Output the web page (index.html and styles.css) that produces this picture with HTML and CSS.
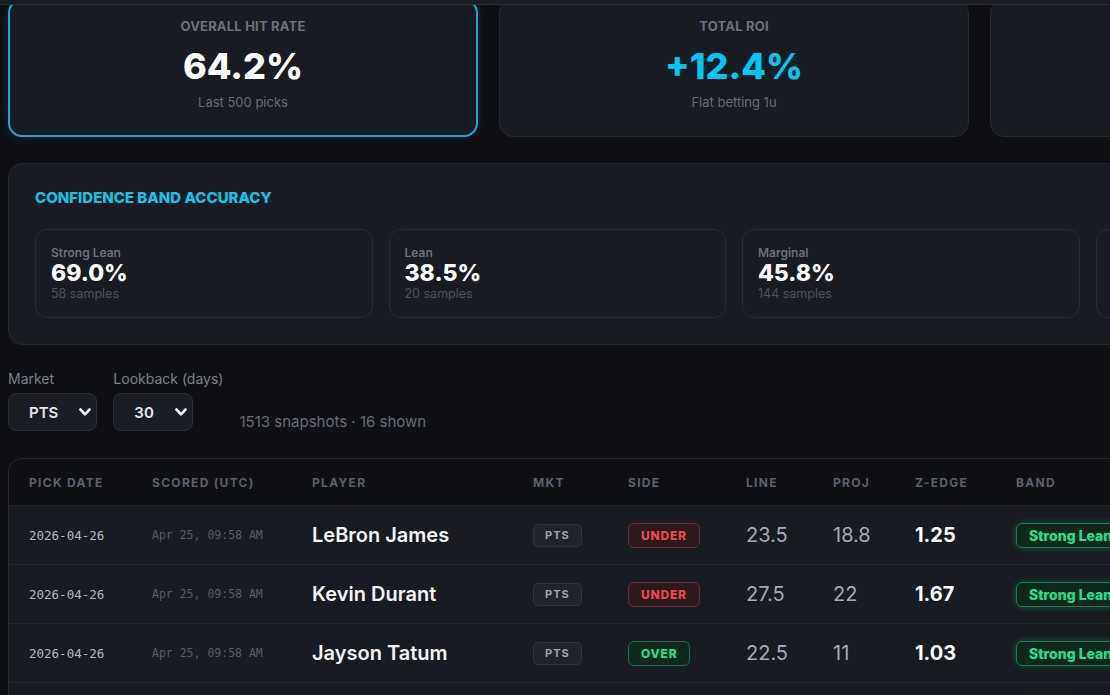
FILE: index.html
```html
<!DOCTYPE html>
<html>
<head>
    <title>Model Accuracy</title>
    <link rel="stylesheet" href="styles.css">
</head>
<body>
    <header class="topbar"></header>

    <main class="page">
        <section class="stats">
            <div class="stat stat-active">
                <div class="stat-label">OVERALL HIT RATE</div>
                <div class="stat-value">64.2%</div>
                <div class="stat-sub">Last 500 picks</div>
            </div>
            <div class="stat">
                <div class="stat-label">TOTAL ROI</div>
                <div class="stat-value stat-cyan">+12.4%</div>
                <div class="stat-sub">Flat betting 1u</div>
            </div>
            <div class="stat">
                <div class="stat-label">PICKS GRADED</div>
                <div class="stat-value">500</div>
                <div class="stat-sub">Since season start</div>
            </div>
        </section>

        <section class="panel">
            <h2 class="panel-title">CONFIDENCE BAND ACCURACY</h2>
            <div class="bands">
                <div class="band">
                    <div class="band-name">Strong Lean</div>
                    <div class="band-rate">69.0%</div>
                    <div class="band-count">58 samples</div>
                </div>
                <div class="band">
                    <div class="band-name">Lean</div>
                    <div class="band-rate">38.5%</div>
                    <div class="band-count">20 samples</div>
                </div>
                <div class="band">
                    <div class="band-name">Marginal</div>
                    <div class="band-rate">45.8%</div>
                    <div class="band-count">144 samples</div>
                </div>
                <div class="band">
                    <div class="band-name">No Edge</div>
                    <div class="band-rate">51.2%</div>
                    <div class="band-count">278 samples</div>
                </div>
            </div>
        </section>

        <section class="filters">
            <div class="filter">
                <label class="filter-label">Market</label>
                <div class="select">
                    <span>PTS</span>
                    <svg class="chevron" width="12" height="8" viewBox="0 0 12 8"><polyline points="1.5,1.5 6,6.3 10.5,1.5"/></svg>
                </div>
            </div>
            <div class="filter">
                <label class="filter-label">Lookback (days)</label>
                <div class="select">
                    <span>30</span>
                    <svg class="chevron" width="12" height="8" viewBox="0 0 12 8"><polyline points="1.5,1.5 6,6.3 10.5,1.5"/></svg>
                </div>
            </div>
            <p class="count">1513 snapshots · 16 shown</p>
        </section>

        <div class="table-wrap">
            <table class="picks">
                <colgroup>
                    <col style="width: 143px">
                    <col style="width: 160px">
                    <col style="width: 221px">
                    <col style="width: 95px">
                    <col style="width: 118px">
                    <col style="width: 87px">
                    <col style="width: 82px">
                    <col style="width: 101px">
                    <col style="width: 170px">
                    <col>
                </colgroup>
                <thead>
                    <tr>
                        <th>PICK DATE</th>
                        <th>SCORED (UTC)</th>
                        <th>PLAYER</th>
                        <th>MKT</th>
                        <th>SIDE</th>
                        <th>LINE</th>
                        <th>PROJ</th>
                        <th>Z-EDGE</th>
                        <th>BAND</th>
                        <th>RESULT</th>
                    </tr>
                </thead>
                <tbody>
                    <tr>
                        <td class="date">2026-04-26</td>
                        <td class="scored">Apr 25, 09:58 AM</td>
                        <td class="player">LeBron James</td>
                        <td><span class="mkt">PTS</span></td>
                        <td><span class="side side-under">UNDER</span></td>
                        <td class="num">23.5</td>
                        <td class="num">18.8</td>
                        <td class="edge">1.25</td>
                        <td><span class="band-tag">Strong Lean</span></td>
                        <td class="num">Pending</td>
                    </tr>
                    <tr>
                        <td class="date">2026-04-26</td>
                        <td class="scored">Apr 25, 09:58 AM</td>
                        <td class="player">Kevin Durant</td>
                        <td><span class="mkt">PTS</span></td>
                        <td><span class="side side-under">UNDER</span></td>
                        <td class="num">27.5</td>
                        <td class="num">22</td>
                        <td class="edge">1.67</td>
                        <td><span class="band-tag">Strong Lean</span></td>
                        <td class="num">Pending</td>
                    </tr>
                    <tr>
                        <td class="date">2026-04-26</td>
                        <td class="scored">Apr 25, 09:58 AM</td>
                        <td class="player">Jayson Tatum</td>
                        <td><span class="mkt">PTS</span></td>
                        <td><span class="side side-over">OVER</span></td>
                        <td class="num">22.5</td>
                        <td class="num">11</td>
                        <td class="edge">1.03</td>
                        <td><span class="band-tag">Strong Lean</span></td>
                        <td class="num">Pending</td>
                    </tr>
                    <tr>
                        <td class="date">2026-04-26</td>
                        <td class="scored">Apr 25, 09:58 AM</td>
                        <td class="player">Nikola Jokic</td>
                        <td><span class="mkt">PTS</span></td>
                        <td><span class="side side-over">OVER</span></td>
                        <td class="num">26.5</td>
                        <td class="num">29.1</td>
                        <td class="edge">0.84</td>
                        <td><span class="band-tag">Lean</span></td>
                        <td class="num">Pending</td>
                    </tr>
                </tbody>
            </table>
        </div>
    </main>
</body>
</html>
```

FILE: styles.css
```css
html, body {
    overflow: hidden;
}

body {
    margin: 0;
    background-color: #0f1014;
    color: #e8eaee;
    font-family: Inter, "Noto Sans", sans-serif;
}

/* Barra in alto (sticky) */
.topbar {
    position: sticky;
    top: 0;
    z-index: 5;
    height: 4px;
    background-color: #1a1d24;
    border-bottom: 1px solid #2a2e36;
}

.page {
    width: 1452px;
    padding: 0 8px 40px;
    margin-top: -6px;
}

/* Card statistiche */
.stats {
    display: grid;
    grid-template-columns: repeat(3, 1fr);
    gap: 21px;
}

.stat {
    background-color: #181b21;
    border: 1px solid #262a31;
    border-radius: 14px;
    padding: 18px 20px 26px;
    text-align: center;
}

.stat-active {
    border: 2px solid #19a6cf;
    padding: 17px 19px 25px;
    box-shadow: 0 0 10px rgba(0, 190, 235, 0.12);
}

.stat-label {
    font-size: 13px;
    line-height: 16px;
    font-weight: 700;
    letter-spacing: 0.2px;
    color: #6b707c;
}

.stat-value {
    margin-top: 11px;
    font-size: 36px;
    line-height: 42px;
    font-weight: 800;
    color: #fff;
}

.stat-cyan {
    color: #00c8f2;
}

.stat-sub {
    margin-top: 7px;
    font-size: 13px;
    line-height: 16px;
    color: #676c77;
}

/* Pannello fasce di confidenza */
.panel {
    margin-top: 26px;
    background-color: #181b21;
    border: 1px solid #262a31;
    border-radius: 14px;
    padding: 25px 26px 26px;
}

.panel-title {
    margin: 0;
    font-size: 15px;
    line-height: 18px;
    font-weight: 800;
    color: #14c3ec;
}

.bands {
    margin-top: 22px;
    display: grid;
    grid-template-columns: repeat(4, 1fr);
    gap: 16px;
}

.band {
    border: 1px solid #272b33;
    border-radius: 12px;
    padding: 15px 15px 16px;
}

.band-name {
    font-size: 12px;
    line-height: 15px;
    font-weight: 600;
    color: #6b707c;
}

.band-rate {
    font-size: 23px;
    line-height: 26px;
    font-weight: 800;
    color: #fff;
}

.band-count {
    font-size: 12.5px;
    line-height: 15px;
    color: #4d525d;
}

/* Filtri */
.filters {
    margin-top: 26px;
    display: flex;
    align-items: flex-end;
    gap: 16px;
}

.filter {
    display: flex;
    flex-direction: column;
    align-items: flex-start;
    gap: 6px;
}

.filter-label {
    font-size: 14px;
    line-height: 16px;
    color: #7b808b;
}

.select {
    display: flex;
    align-items: center;
    gap: 21px;
    height: 36px;
    padding: 0 5px 0 20px;
    background-color: #1a1d24;
    border: 1px solid #282c34;
    border-radius: 8px;
    font-size: 15px;
    font-weight: 600;
    color: #e6e8ec;
}

.chevron {
    fill: none;
    stroke: #f2f3f5;
    stroke-width: 2.6;
    stroke-linecap: round;
    stroke-linejoin: round;
}

.count {
    margin: 0;
    font-size: 15px;
    line-height: 18px;
    color: #676c77;
}

/* Tabella pick */
.table-wrap {
    margin-top: 27px;
    border: 1px solid #262a31;
    border-radius: 14px;
    overflow: hidden;
    background-color: #181b21;
}

.picks {
    width: 100%;
    table-layout: fixed;
    border-collapse: collapse;
}

.picks th {
    height: 46px;
    padding: 0;
    background-color: #0e1014;
    text-align: left;
    font-size: 12px;
    font-weight: 700;
    letter-spacing: 1.3px;
    color: #5b606b;
}

.picks td {
    height: 58px;
    padding: 0;
    border-top: 1px solid #22262d;
    white-space: nowrap;
}

.picks th:first-child,
.picks td:first-child {
    padding-left: 20px;
}

.date {
    font-family: "DejaVu Sans Mono", monospace;
    font-size: 12.5px;
    color: #b4b8c1;
}

.scored {
    font-family: "DejaVu Sans Mono", monospace;
    font-size: 11.5px;
    color: #575c67;
}

.player {
    font-size: 20px;
    font-weight: 600;
    color: #f4f5f7;
}

.num {
    font-size: 20px;
    color: #a5aab4;
}

.edge {
    font-size: 20px;
    font-weight: 700;
    color: #fff;
}

.mkt {
    display: inline-block;
    padding: 0 11px;
    line-height: 21px;
    border: 1px solid #2e323b;
    border-radius: 5px;
    background-color: #1f232a;
    font-size: 11px;
    font-weight: 700;
    letter-spacing: 1px;
    color: #9ea3ad;
}

.side {
    display: inline-block;
    padding: 0 12px;
    line-height: 23px;
    border-radius: 6px;
    font-size: 12px;
    font-weight: 800;
    letter-spacing: 0.8px;
}

.side-under {
    color: #f0474d;
    background-color: #2a1a1e;
    border: 1px solid #6b2a31;
}

.side-over {
    color: #1de488;
    background-color: #10271e;
    border: 1px solid #1c6e47;
}

.band-tag {
    display: inline-block;
    padding: 0 12px;
    line-height: 23px;
    border-radius: 6px;
    border: 1px solid #1d7f50;
    background-color: #10271e;
    box-shadow: 0 0 7px rgba(20, 220, 120, 0.3);
    font-size: 14px;
    font-weight: 800;
    color: #1de488;
}
```
